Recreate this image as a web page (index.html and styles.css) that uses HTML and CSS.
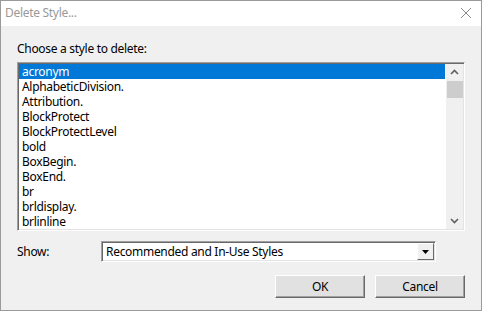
FILE: index.html
```html
<!DOCTYPE html>
<html lang="en">

<head>
  <meta charset="UTF-8" />
  <title>Delete Style...</title>
  <link rel="stylesheet" href="styles.css">
</head>

<body>
  <div class="window">
    <div class="titlebar">
      <span class="title">Delete Style...</span>
      <svg class="close" width="12" height="12" viewBox="0 0 12 12">
        <path d="M1 1 L11 11 M11 1 L1 11" stroke="#8a8a8a" stroke-width="1" fill="none" />
      </svg>
    </div>

    <div class="content">
      <div class="label">Choose a style to delete:</div>

      <div class="listbox">
        <ul class="items">
          <li class="selected">acronym</li>
          <li>AlphabeticDivision.</li>
          <li>Attribution.</li>
          <li>BlockProtect</li>
          <li>BlockProtectLevel</li>
          <li>bold</li>
          <li>BoxBegin.</li>
          <li>BoxEnd.</li>
          <li>br</li>
          <li>brldisplay.</li>
          <li>brlinline</li>
        </ul>
        <div class="scrollbar">
          <svg class="arrow" width="17" height="17" viewBox="0 0 17 17">
            <path d="M5 10 L8.5 6.5 L12 10" stroke="#606060" stroke-width="1.6" fill="none" />
          </svg>
          <div class="thumb"></div>
          <div class="track"></div>
          <svg class="arrow" width="17" height="17" viewBox="0 0 17 17">
            <path d="M5 7 L8.5 10.5 L12 7" stroke="#606060" stroke-width="1.6" fill="none" />
          </svg>
        </div>
      </div>

      <div class="show-row">
        <span class="show-label">Show:</span>
        <div class="combo">
          <span class="combo-text">Recommended and In-Use Styles</span>
          <div class="combo-btn">
            <svg width="7" height="4" viewBox="0 0 7 4">
              <path d="M0 0 L7 0 L3.5 4 Z" fill="#000" />
            </svg>
          </div>
        </div>
      </div>

      <div class="buttons">
        <button class="btn">OK</button>
        <button class="btn">Cancel</button>
      </div>
    </div>
  </div>
</body>

</html>
```

FILE: styles.css
```css
body {
  margin: 0;
  font-family: "Noto Sans", "Open Sans", sans-serif;
  font-size: 12px;
  letter-spacing: -0.3px;
  background-color: #f0f0f0;
}

.window {
  width: 482px;
  height: 311px;
  box-sizing: border-box;
  border: 1px solid #9a9a9a;
  display: flex;
  flex-direction: column;
  background-color: #f0f0f0;
}

.titlebar {
  height: 25px;
  background-color: #fff;
  display: flex;
  align-items: center;
  justify-content: space-between;
  padding: 0 9px 0 4px;
}

.title {
  color: #999;
  font-size: 12px;
  margin-top: -2px;
}

.close {
  margin-top: -2px;
}

.content {
  flex: 1;
  padding: 15px 16px 0 16px;
  display: flex;
  flex-direction: column;
  color: #000;
}

.label {
  line-height: 15px;
  margin-bottom: 6px;
}

.listbox {
  height: 169px;
  box-sizing: border-box;
  border-top: 1px solid #a0a0a0;
  border-left: 1px solid #a0a0a0;
  border-right: 1px solid #fff;
  border-bottom: 1px solid #fff;
  box-shadow: inset 1px 1px 0 #696969, inset -1px -1px 0 #e3e3e3;
  background-color: #fff;
  display: flex;
  padding: 1px;
}

.items {
  flex: 1;
  list-style: none;
  margin: 0;
  padding: 0;
  overflow: hidden;
}

.items li {
  height: 15px;
  line-height: 15px;
  padding-left: 3px;
  white-space: nowrap;
}

.items li.selected {
  background-color: #0078d7;
  color: #fff;
}

.scrollbar {
  width: 17px;
  margin-left: 1px;
  background-color: #f0f0f0;
  display: flex;
  flex-direction: column;
}

.arrow {
  display: block;
  flex: none;
}

.thumb {
  height: 17px;
  margin: 0 0 0 1px;
  background-color: #cdcdcd;
}

.track {
  flex: 1;
}

.show-row {
  display: flex;
  align-items: flex-start;
  margin-top: 10px;
}

.show-label {
  width: 84px;
  line-height: 15px;
  padding-top: 3px;
}

.combo {
  width: 335px;
  height: 21px;
  box-sizing: border-box;
  border-top: 1px solid #a0a0a0;
  border-left: 1px solid #a0a0a0;
  border-right: 1px solid #fff;
  border-bottom: 1px solid #fff;
  box-shadow: inset 1px 1px 0 #696969, inset -1px -1px 0 #e3e3e3;
  background-color: #fff;
  display: flex;
  align-items: center;
  justify-content: space-between;
  padding: 0 1px 0 4px;
}

.combo-btn {
  width: 17px;
  height: 17px;
  box-sizing: border-box;
  background-color: #f0f0f0;
  border-top: 1px solid #fff;
  border-left: 1px solid #fff;
  border-right: 1px solid #696969;
  border-bottom: 1px solid #696969;
  display: flex;
  align-items: center;
  justify-content: center;
}

.buttons {
  display: flex;
  justify-content: flex-end;
  gap: 10px;
  margin-top: 13px;
}

.btn {
  width: 90px;
  height: 23px;
  font-family: inherit;
  font-size: 12px;
  letter-spacing: inherit;
  color: #000;
  background-color: #e1e1e1;
  border-top: 1px solid #fff;
  border-left: 1px solid #fff;
  border-right: 1px solid #696969;
  border-bottom: 1px solid #696969;
  box-shadow: inset -1px -1px 0 #a0a0a0;
  padding: 0;
}
```
